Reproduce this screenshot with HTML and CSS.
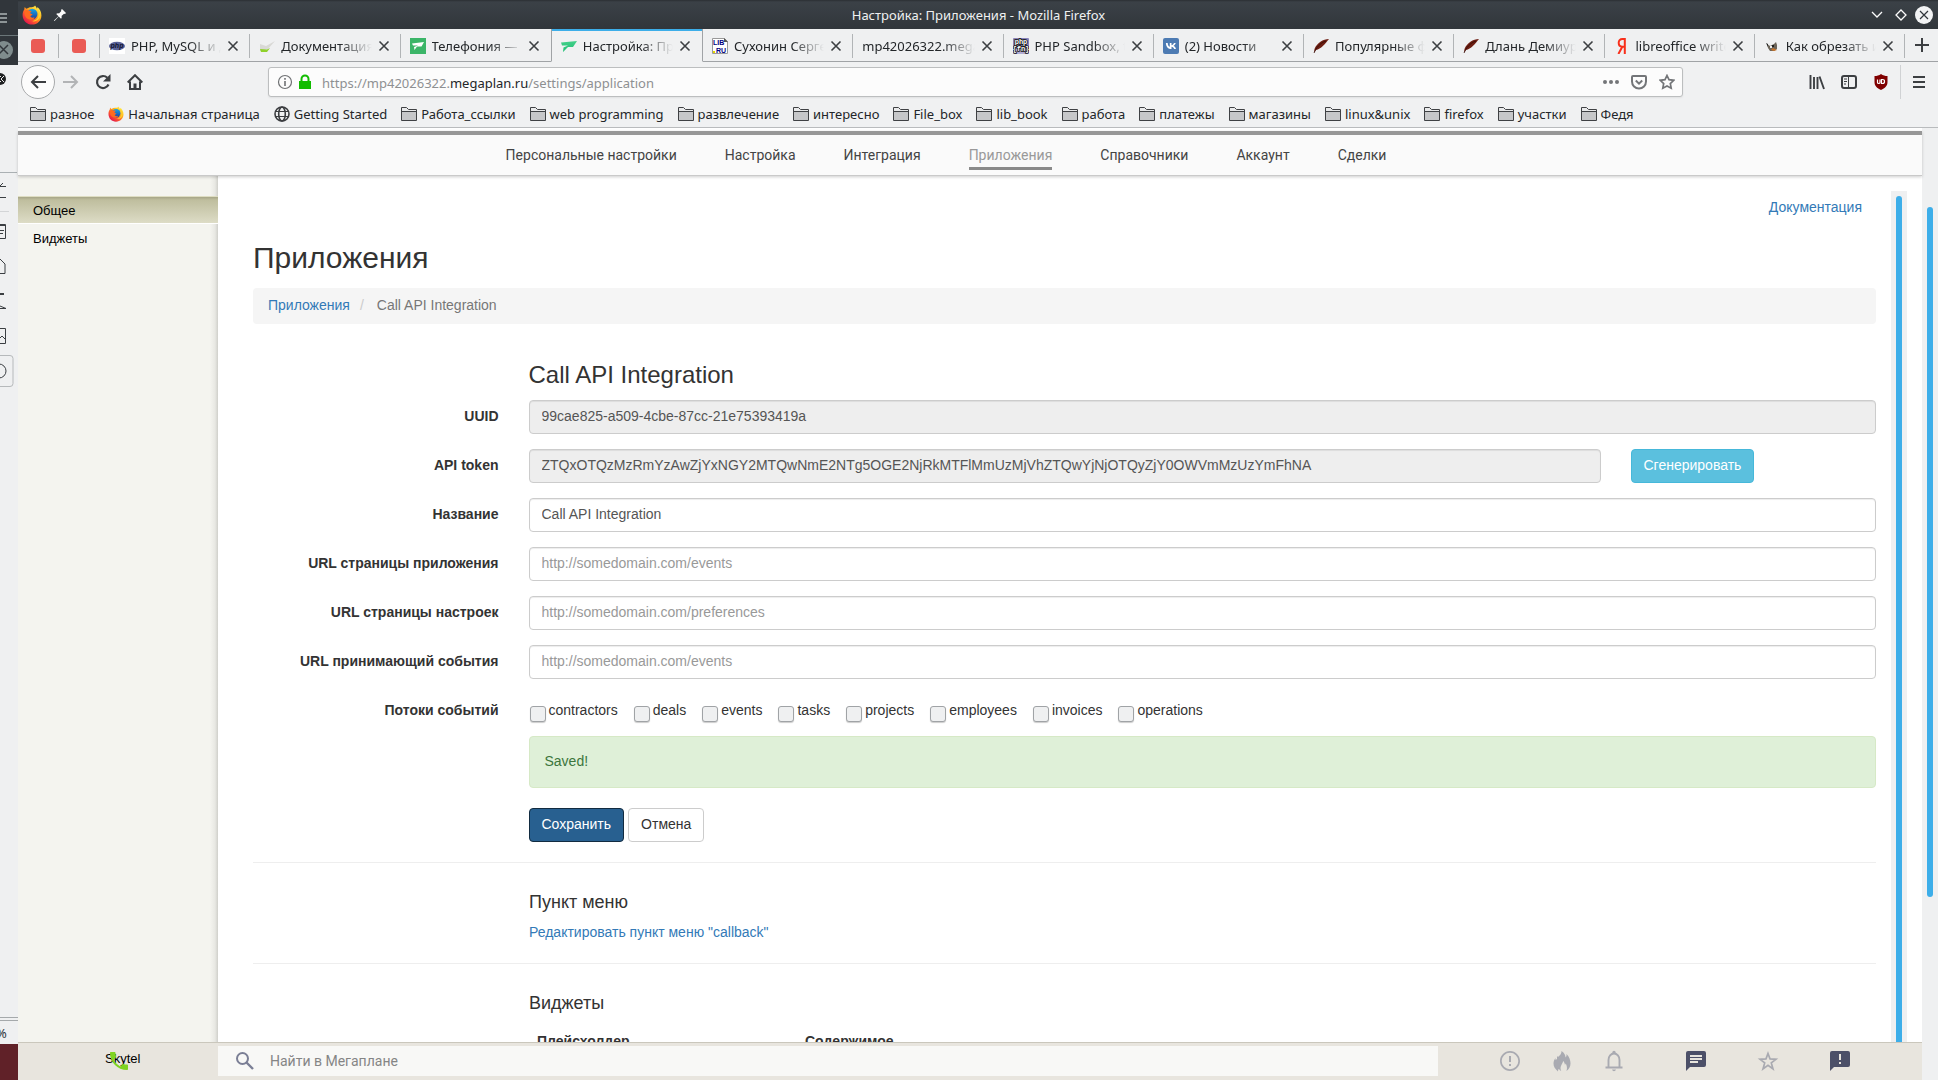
FILE: index.html
```html
<!DOCTYPE html>
<html lang="ru">
<head>
<meta charset="utf-8">
<title>Настройка: Приложения - Mozilla Firefox</title>
<meta name="viewport" content="width=device-width, initial-scale=1">
<link rel="stylesheet" href="styles.css">
</head>
<body>
<svg class="defs" aria-hidden="true">
  <defs>
    <linearGradient id="fx-flame" x1="0.9" y1="0.1" x2="0.2" y2="0.95">
      <stop offset="0" stop-color="#fff44f"/><stop offset="0.35" stop-color="#ffb31a"/><stop offset="0.65" stop-color="#ff5a2c"/><stop offset="1" stop-color="#e0124f"/>
    </linearGradient>
    <linearGradient id="fx-globe" x1="0" y1="0" x2="0" y2="1"><stop offset="0" stop-color="#16a7e8"/><stop offset="1" stop-color="#1f3f9e"/></linearGradient>
    <linearGradient id="mp-green" x1="0" y1="0" x2="0" y2="1"><stop offset="0" stop-color="#45d08a"/><stop offset="1" stop-color="#1fbf74"/></linearGradient>
  </defs>
  <symbol id="firefox" viewBox="0 0 20 20">
    <path fill="url(#fx-flame)" d="M13 0.6c1 1 1.5 2 1.8 3 .6-.3.6-1 .6-1.5 2.600 2 4 5 4 8.300C19.400 15.600 15.200 19.600 10 19.600S.6 15.600.6 10c0-2.500.8-4.400 1.700-5.600 0-.8.100-1.700.5-2.400.4.900 1 1.500 1.600 1.800C6 2.600 8 2 9.500 2.200 11 2 12.500 2 13 .6z"/>
    <circle cx="10.200" cy="9" r="5.300" fill="url(#fx-globe)"/>
    <path fill="#ff6a1f" d="M2.600 5.800c1.500-1 3.600-.9 4.900 0 1.200-.3 1.900 0 2.400.4-1 .4-1.600 1.200-1.600 1.900 0 .8 1.200 1 2.200 1-.2 1.200-1.400 1.500-2.200 2.200.6 1.500 2.500 1.700 4 1 .5.700-1 2.400-3.300 2.400-3.200 0-5.700-2.300-6.400-4.900z"/>
    <path fill="#ffcf2e" d="M15 4.500c2 2 2.500 5.500.8 8.300-1.100 1.900-3.400 3.300-5.700 3.300 3.700 1.200 8-1.500 8.200-6C18.400 7.600 17 5.600 15 4.500z"/>
  </symbol>
  <symbol id="folder" viewBox="0 0 16 16">
    <path d="M.5 1.500h5l2 2h8v11h-15z" fill="#e9eaeb" stroke="#3f4144"/>
    <path d="M1 6h14v8H1z" fill="#c6c7c9"/><path d="M1 5.500h14" stroke="#3f4144"/>
  </symbol>
  <symbol id="globe" viewBox="0 0 16 16">
    <g fill="none" stroke="#3b3d40" stroke-width="1.600"><circle cx="8" cy="8" r="7"/><ellipse cx="8" cy="8" rx="3.300" ry="7"/><path d="M1.500 5.500h13M1.500 10.500h13" stroke-width="1.200"/></g>
  </symbol>
  <symbol id="cross" viewBox="0 0 12 12"><path d="M1.500 1.500l9 9M10.500 1.500l-9 9" stroke="#3c3f42" stroke-width="1.600"/></symbol>
  <symbol id="pinned" viewBox="0 0 16 16"><rect x="1" y="1" width="14" height="14" rx="3" fill="#ea5b55"/></symbol>
  <symbol id="docs" viewBox="0 0 16 16"><path fill="#d9d9d6" d="M1 6l6 2 9-5-7 8-8 2z"/><path fill="#8fd12b" d="M1 11l7 .5 3-1.500-3 4H2z"/></symbol>
  <symbol id="mp-square" viewBox="0 0 16 16"><path fill="#3bb568" d="M0 0h16v16H0z"/><path fill="#fff" d="M2 5.500L14 4l-2.500 4.500H7L4.500 12 4 9l4-1.500H3z"/></symbol>
  <symbol id="mp-plain" viewBox="0 0 16 16"><path fill="url(#mp-green)" d="M0 4.500L16 3l-4 6H7l-5 5 .5-4.500L7 7.500H1z"/></symbol>
  <symbol id="vk" viewBox="0 0 16 16"><rect width="16" height="16" rx="2" fill="#4d7bb3"/><path fill="#fff" d="M8.600 11C5 11 3 8.600 2.900 4.900h1.800c.1 2.600 1.200 3.700 2.100 3.900V4.900h1.700v2.300c1-.1 2.100-1.200 2.500-2.300h1.700c-.3 1.400-1.400 2.400-2.200 2.900.8.400 2 1.300 2.500 3.200h-1.900c-.4-1.200-1.400-2.100-2.600-2.200V11z"/></symbol>
  <symbol id="feather" viewBox="0 0 16 16"><path fill="#6d1d12" d="M16 1C10 1 4 5 1.500 11L1 15l2-3c5-1 9-6 13-11z"/><path stroke="#2b0905" stroke-width=".7" d="M1 15C3 10 7 5 13 3" fill="none"/></symbol>
  <symbol id="yandex" viewBox="0 0 16 16"><path fill="none" stroke="#f8301b" stroke-width="2" d="M10.800 16V1H8.500C5.900 1 4.700 2.700 4.700 4.800 4.700 7.300 6 8.700 8.400 8.700h2.400M8.300 8.700L4.400 16"/></symbol>
  <symbol id="gimp" viewBox="0 0 16 16"><path fill="#6b6459" d="M3 6l3 2 4-2 2-2 1 3v4l-3 2H6L4 10z"/><path fill="#222" d="M2 5l2 1v3zM8 7h2v2H8z"/><path fill="#c7742a" d="M9 10l4 2-3 1-3-1z"/><path fill="#eee" d="M6 8h2v2H6z"/></symbol>
</svg>

<div class="desktop">
  <aside class="behind" aria-hidden="true">
    <svg class="behind-top" width="18" height="400" viewBox="0 0 18 400">
      <path fill="#31363b" d="M0 0h18v65H0z"/><path fill="#6b7679" d="M0 35h18v1H0z"/>
      <path stroke="#8d9496" stroke-width="2" d="M0 14h7M0 18h7M0 22h7"/>
      <circle cx="4" cy="50" r="9" fill="#7f8c8d"/><path d="M-1 45l9 9M8 45l-9 9" stroke="#31363b" stroke-width="1.500"/>
      <circle cx="0" cy="79" r="6" fill="#1f2122"/><path d="M1 76l-3 3 3 3M4 76l-3 3 3 3" stroke="#eee" fill="none"/>
      <path fill="#aab0b3" d="M0 172h17v1H0z"/>
      <g fill="none" stroke="#3b3f43"><path d="M0 186.500h6M0 197.500h6M0 186l3-3M0 224.500h5.500v14H0M0 230.500h4M0 233.500h3M0 259l5 5v9.500H0M0 306l6 2.500H0M0 328.500h5.500v15H0M0 338l2-2 3 3"/><path stroke-width="2" d="M0 225h5M0 294h4"/><circle cx="-1" cy="371" r="7"/></g>
      <path stroke="#d3d5d7" d="M0 211.500h9"/><path stroke="#b6b9bb" fill="none" d="M0 355.500h10q3 0 3 3v25q0 3-3 3H0"/>
    </svg>
    <div class="behind-bottom"><span class="percent">%</span><span class="panel"></span></div>
  </aside>

  <div class="window">
    <header class="titlebar">
      <svg width="20" height="20"><use href="#firefox"/></svg>
      <svg width="12" height="12" viewBox="0 0 12 12"><path fill="#fcfcfc" d="M8 0l4 4-1 1-1-.3L7.500 7c.4 1.200.2 2-.5 2.800L4.700 7.500.8 11.800 0 12l.2-.8L4.500 7.300 2.200 5C3 4.200 4 4 5 4.500L7.300 2 7 1z"/></svg>
      <h1 class="window-title">Настройка: Приложения - Mozilla Firefox</h1>
      <button class="plain" aria-label="Свернуть"><svg width="12" height="12" viewBox="0 0 12 12"><path d="M1 3l5 5 5-5" fill="none" stroke="#fcfcfc" stroke-width="1.300"/></svg></button>
      <button class="plain" aria-label="Развернуть"><svg width="12" height="12" viewBox="0 0 12 12"><path d="M6 1l5 5-5 5-5-5z" fill="none" stroke="#fcfcfc" stroke-width="1.300"/></svg></button>
      <button class="plain close-window" aria-label="Закрыть"><svg width="18" height="18" viewBox="0 0 18 18"><circle cx="9" cy="9" r="9" fill="#f2f3f4"/><path d="M5 5l8 8M13 5l-8 8" stroke="#31363b" stroke-width="1.200"/></svg></button>
    </header>

    <nav class="tabs" aria-label="Вкладки">
      <div class="tab pin"><svg width="16" height="16"><use href="#pinned"/></svg></div>
      <div class="tab pin"><svg width="16" height="16"><use href="#pinned"/></svg></div>
      <div class="tab"><svg width="16" height="16" viewBox="0 0 16 16"><path fill="#fff" d="M0 0h16v16H0z"/><ellipse cx="8" cy="8" rx="8" ry="4.300" fill="#5a6399"/><text x="8" y="10" text-anchor="middle" font-family="Liberation Sans" font-size="7" font-weight="700" font-style="italic" fill="#10132e">php</text></svg><span class="tab-text">PHP, MySQL и другие веб</span><button class="plain" aria-label="Закрыть вкладку"><svg width="12" height="12"><use href="#cross"/></svg></button></div>
      <div class="tab"><svg width="16" height="16"><use href="#docs"/></svg><span class="tab-text">Документация</span><button class="plain" aria-label="Закрыть вкладку"><svg width="12" height="12"><use href="#cross"/></svg></button></div>
      <div class="tab before-active"><svg width="16" height="16"><use href="#mp-square"/></svg><span class="tab-text">Телефония — Мегаплан</span><button class="plain" aria-label="Закрыть вкладку"><svg width="12" height="12"><use href="#cross"/></svg></button></div>
      <div class="tab active"><svg width="16" height="16"><use href="#mp-plain"/></svg><span class="tab-text">Настройка: Приложения</span><button class="plain" aria-label="Закрыть вкладку"><svg width="12" height="12"><use href="#cross"/></svg></button></div>
      <div class="tab"><svg width="16" height="16" viewBox="0 0 16 16"><path fill="#fff" stroke="#999" d="M.5.500h12l3 3v12H.5z"/><path fill="#555" d="M12 0l4 4h-4z"/><text x="1" y="7" font-family="Liberation Sans" font-size="7" font-weight="700" fill="#000080">LIB</text><text x="4" y="15" font-family="Liberation Sans" font-size="7" font-weight="700" fill="#000080">RU</text><path fill="#e7d600" d="M1 13h2v2H1z"/></svg><span class="tab-text">Сухонин Сергей</span><button class="plain" aria-label="Закрыть вкладку"><svg width="12" height="12"><use href="#cross"/></svg></button></div>
      <div class="tab"><span class="tab-text">mp42026322.megaplan.ru</span><button class="plain" aria-label="Закрыть вкладку"><svg width="12" height="12"><use href="#cross"/></svg></button></div>
      <div class="tab"><svg width="16" height="16" viewBox="0 0 16 16"><rect width="16" height="16" rx="1" fill="#8a83b8"/><path fill="#b1acd3" d="M0 11h16v5H0z"/><g font-family="Liberation Mono" font-size="7" font-weight="700" fill="#fff" stroke="#111" stroke-width="1.600" paint-order="stroke" text-anchor="middle"><text x="8" y="6">php</text><text x="8" y="13">{fn}</text></g></svg><span class="tab-text">PHP Sandbox, test</span><button class="plain" aria-label="Закрыть вкладку"><svg width="12" height="12"><use href="#cross"/></svg></button></div>
      <div class="tab"><svg width="16" height="16"><use href="#vk"/></svg><span class="tab-text">(2) Новости</span><button class="plain" aria-label="Закрыть вкладку"><svg width="12" height="12"><use href="#cross"/></svg></button></div>
      <div class="tab"><svg width="16" height="16"><use href="#feather"/></svg><span class="tab-text">Популярные фанфики</span><button class="plain" aria-label="Закрыть вкладку"><svg width="12" height="12"><use href="#cross"/></svg></button></div>
      <div class="tab"><svg width="16" height="16"><use href="#feather"/></svg><span class="tab-text">Длань Демиурга</span><button class="plain" aria-label="Закрыть вкладку"><svg width="12" height="12"><use href="#cross"/></svg></button></div>
      <div class="tab"><svg width="16" height="16"><use href="#yandex"/></svg><span class="tab-text">libreoffice writer</span><button class="plain" aria-label="Закрыть вкладку"><svg width="12" height="12"><use href="#cross"/></svg></button></div>
      <div class="tab"><svg width="16" height="16"><use href="#gimp"/></svg><span class="tab-text">Как обрезать изображение</span><button class="plain" aria-label="Закрыть вкладку"><svg width="12" height="12"><use href="#cross"/></svg></button></div>
      <button class="plain new-tab" aria-label="Новая вкладка"><svg width="14" height="14" viewBox="0 0 14 14"><path d="M7 0v14M0 7h14" stroke="#3c3f42" stroke-width="2"/></svg></button>
    </nav>

    <div class="toolbar">
      <div class="nav-buttons">
        <button class="back" aria-label="Назад"><svg width="16" height="14" viewBox="0 0 16 14"><path d="M16 7H2M8 1L2 7l6 6" fill="none" stroke="#3c3f42" stroke-width="2"/></svg></button>
        <button class="plain" aria-label="Вперёд"><svg width="16" height="14" viewBox="0 0 16 14"><path d="M0 7h14M8 1l6 6-6 6" fill="none" stroke="#b2b4b6" stroke-width="2"/></svg></button>
        <button class="plain" aria-label="Обновить"><svg width="16" height="16" viewBox="0 0 16 16"><path d="M13.500 10.500A6 6 0 1 1 12.300 3.800" fill="none" stroke="#3c3f42" stroke-width="2.200"/><path d="M15.500 0v7.500H8z" fill="#3c3f42"/></svg></button>
        <button class="plain" aria-label="Домой"><svg width="16" height="16" viewBox="0 0 16 16"><path d="M.7 8.500L8 1.200l7.300 7.300M3 7.500V15h10V7.500" fill="none" stroke="#3c3f42" stroke-width="2"/><path d="M6.500 9.500h3V15h-3z" fill="#3c3f42"/></svg></button>
      </div>
      <div class="urlbar">
        <svg width="16" height="16" viewBox="0 0 16 16"><circle cx="8" cy="8" r="6.500" fill="none" stroke="#6f7173" stroke-width="1.200"/><path d="M7.200 7h1.600v5H7.200zM7.200 4h1.600v1.700H7.200z" fill="#6f7173"/></svg>
        <svg width="16" height="16" viewBox="0 0 16 16"><path d="M2 7h12v8H2z" fill="#12bc00"/><path d="M4.500 8V5a3.500 3.500 0 0 1 7 0v3" fill="none" stroke="#12bc00" stroke-width="2"/></svg>
        <div class="url" role="textbox" aria-label="Адрес" contenteditable="true" spellcheck="false">https://mp42026322.<b>megaplan.ru</b>/settings/application</div>
        <button class="plain" aria-label="Действия"><svg width="16" height="16" viewBox="0 0 16 16"><g fill="#737578"><circle cx="2" cy="8" r="2"/><circle cx="8" cy="8" r="2"/><circle cx="14" cy="8" r="2"/></g></svg></button>
        <button class="plain" aria-label="Pocket"><svg width="16" height="16" viewBox="0 0 16 16"><path d="M2 2h12q1 0 1 1v4.500a7 7 0 0 1-14 0V3q0-1 1-1z" fill="none" stroke="#737578" stroke-width="2"/><path d="M4.800 6.500L8 9.600l3.200-3.100" fill="none" stroke="#737578" stroke-width="2"/></svg></button>
        <button class="plain" aria-label="В закладки"><svg width="16" height="16" viewBox="0 0 16 16"><path d="M8 1.500l2 4.200 4.800.6-3.500 3.200.9 4.700L8 12l-4.200 2.200.9-4.700L1.200 6.300 6 5.700z" fill="none" stroke="#737578" stroke-width="1.700"/></svg></button>
      </div>
      <div class="tools">
        <button class="plain" aria-label="Библиотека"><svg width="16" height="16" viewBox="0 0 16 16"><path d="M1.500 1v14M5 3v12M8.500 3v12M10.500 2.500L15 15" stroke="#3c3f42" stroke-width="1.900"/></svg></button>
        <button class="plain" aria-label="Боковая панель"><svg width="16" height="16" viewBox="0 0 16 16"><rect x="1" y="2" width="14" height="12" rx="2" fill="none" stroke="#3c3f42" stroke-width="2"/><path d="M7.500 2v12" stroke="#3c3f42"/><path d="M3 5h3M3 7.500h3M3 10h2" stroke="#3c3f42"/></svg></button>
        <button class="plain" aria-label="uBlock Origin"><svg width="16" height="16" viewBox="0 0 16 16"><path d="M8 0c2 1.500 4 2 6.500 2v6c0 4-2.500 6-6.500 8-4-2-6.500-4-6.500-8V2C4 2 6 1.500 8 0z" fill="#800000"/><path d="M4.500 5.500v3q0 1 1.200 1t1.300-1v-3M8.500 9.500h1q2 0 2-2t-2-2h-1z" fill="none" stroke="#fff" stroke-width="1.200"/></svg></button>
        <button class="plain menu" aria-label="Меню"><svg width="12" height="16" viewBox="0 0 12 16"><path d="M0 3h12M0 8h12M0 13h12" stroke="#3c3f42" stroke-width="2"/></svg></button>
      </div>
    </div>

    <nav class="bookmarks" aria-label="Закладки">
      <a href="#"><svg width="16" height="16"><use href="#folder"/></svg>разное</a>
      <a href="#"><svg width="16" height="16"><use href="#firefox"/></svg>Начальная страница</a>
      <a href="#"><svg width="16" height="16"><use href="#globe"/></svg>Getting Started</a>
      <a href="#"><svg width="16" height="16"><use href="#folder"/></svg>Работа_ссылки</a>
      <a href="#"><svg width="16" height="16"><use href="#folder"/></svg>web programming</a>
      <a href="#"><svg width="16" height="16"><use href="#folder"/></svg>развлечение</a>
      <a href="#"><svg width="16" height="16"><use href="#folder"/></svg>интересно</a>
      <a href="#"><svg width="16" height="16"><use href="#folder"/></svg>File_box</a>
      <a href="#"><svg width="16" height="16"><use href="#folder"/></svg>lib_book</a>
      <a href="#"><svg width="16" height="16"><use href="#folder"/></svg>работа</a>
      <a href="#"><svg width="16" height="16"><use href="#folder"/></svg>платежы</a>
      <a href="#"><svg width="16" height="16"><use href="#folder"/></svg>магазины</a>
      <a href="#"><svg width="16" height="16"><use href="#folder"/></svg>linux&amp;unix</a>
      <a href="#"><svg width="16" height="16"><use href="#folder"/></svg>firefox</a>
      <a href="#"><svg width="16" height="16"><use href="#folder"/></svg>участки</a>
      <a href="#"><svg width="16" height="16"><use href="#folder"/></svg>Федя</a>
    </nav>

    <div class="viewport">
      <div class="page">
        <nav class="site-nav" aria-label="Разделы">
          <a href="#">Персональные настройки</a><a href="#">Настройка</a><a href="#">Интеграция</a><a href="#" class="current">Приложения</a><a href="#">Справочники</a><a href="#">Аккаунт</a><a href="#">Сделки</a>
        </nav>
        <div class="site-body">
          <nav class="sidebar" aria-label="Меню">
            <a href="#" class="current">Общее</a>
            <a href="#">Виджеты</a>
          </nav>
          <main class="content">
            <div class="docs-link"><a href="#">Документация</a></div>
            <h2 class="page-title">Приложения</h2>
            <ol class="breadcrumb"><li><a href="#">Приложения</a></li><li>Call API Integration</li></ol>
            <form class="form">
              <h3 class="form-title">Call API Integration</h3>
              <label class="label" for="uuid">UUID</label>
              <input class="control" id="uuid" value="99cae825-a509-4cbe-87cc-21e75393419a" readonly>
              <label class="label" for="token">API token</label>
              <div class="token-row">
                <input class="control" id="token" value="ZTQxOTQzMzRmYzAwZjYxNGY2MTQwNmE2NTg5OGE2NjRkMTFlMmUzMjVhZTQwYjNjOTQyZjY0OWVmMzUzYmFhNA" readonly>
                <div><button type="button" class="btn info">Сгенерировать</button></div>
              </div>
              <label class="label" for="name">Название</label>
              <input class="control" id="name" value="Call API Integration">
              <label class="label" for="app-url">URL страницы приложения</label>
              <input class="control" id="app-url" placeholder="http://somedomain.com/events">
              <label class="label" for="pref-url">URL страницы настроек</label>
              <input class="control" id="pref-url" placeholder="http://somedomain.com/preferences">
              <label class="label" for="event-url">URL принимающий события</label>
              <input class="control" id="event-url" placeholder="http://somedomain.com/events">
              <span class="label" id="streams">Потоки событий</span>
              <div class="checks" role="group" aria-labelledby="streams">
                <label><input type="checkbox">contractors</label>
                <label><input type="checkbox">deals</label>
                <label><input type="checkbox">events</label>
                <label><input type="checkbox">tasks</label>
                <label><input type="checkbox">projects</label>
                <label><input type="checkbox">employees</label>
                <label><input type="checkbox">invoices</label>
                <label><input type="checkbox">operations</label>
              </div>
              <div class="alert" role="status">Saved!</div>
              <div class="actions"><button type="button" class="btn primary">Сохранить</button><button type="button" class="btn default">Отмена</button></div>
            </form>
            <section class="section">
              <h4>Пункт меню</h4>
              <a href="#">Редактировать пункт меню "callback"</a>
            </section>
            <section class="section">
              <h4>Виджеты</h4>
              <table class="widgets"><thead><tr><th>Плейсхолдер</th><th>Содержимое</th></tr></thead></table>
            </section>
          </main>
          <div class="scroll inner"><span></span></div>
        </div>
        <footer class="dock">
          <a class="skytel" href="#">Skytel<svg width="24" height="24" viewBox="0 0 24 24"><path d="M6.620 10.790c1.440 2.830 3.760 5.140 6.590 6.590l2.200-2.200c.27-.27.670-.36 1.020-.24 1.120.37 2.330.57 3.570.57.550 0 1 .45 1 1V20c0 .55-.45 1-1 1-9.390 0-17-7.610-17-17 0-.55.450-1 1-1h3.500c.55 0 1 .45 1 1 0 1.250.200 2.450.570 3.570.110.350.030.740-.250 1.020z" fill="#7ed321"/></svg></a>
          <div class="search">
            <svg width="18" height="18" viewBox="0 0 18 18"><circle cx="6.500" cy="6.500" r="5.500" fill="none" stroke="#7b7f95" stroke-width="2"/><path d="M10.500 10.500l6.500 6.500" stroke="#7b7f95" stroke-width="2.400"/></svg>
            <input type="search" aria-label="Поиск" placeholder="Найти в Мегаплане">
          </div>
          <div class="dock-icons">
            <button class="plain" aria-label="Важное"><svg width="24" height="24" viewBox="0 0 24 24"><path fill="#a9aab1" d="M11 15h2v2h-2zm0-8h2v6h-2zm1-5C6.500 2 2 6.500 2 12s4.500 10 10 10 10-4.500 10-10S17.500 2 12 2zm0 18.300a8.300 8.300 0 1 1 0-16.600 8.300 8.300 0 0 1 0 16.600z"/></svg></button>
            <button class="plain" aria-label="Горящее"><svg width="24" height="24" viewBox="0 0 24 24"><path fill="#a9aab1" d="M11.500 2c3 2 4 4.500 4 6.500l1-1.500V5c3 3 4 6.500 4 9.500 0 3-1.500 5.500-4 7.500 1-3 .3-5.500-.8-7.500l-.7 1.500c-.3-2-.8-3-1.800-4-.2 2-2.700 4.500-2.700 7 0 1 .3 2 .7 3-.9-.3-1.700-1-2.200-2l-.8.500-.2 2C5 20 3.500 17.500 3.500 14.500c0-2 .8-4 2-5.500v2l1.500-1V7l1 1c2.500-2 3.500-3.500 3.500-6z"/></svg></button>
            <button class="plain" aria-label="Уведомления"><svg width="24" height="24" viewBox="0 0 24 24"><path fill="none" stroke="#a9aab1" stroke-width="1.900" d="M3.500 18.500h17M6.500 18v-7a5.500 6.500 0 0 1 11 0v7"/><path fill="#a9aab1" d="M10.300 5V3.500a1.700 1.700 0 0 1 3.400 0V5zM10 20.500h4q-.5 1.800-2 1.800t-2-1.800z"/></svg></button>
            <button class="plain" aria-label="Сообщения"><svg width="24" height="24" viewBox="0 0 24 24"><path fill="#4c5068" d="M20 2H4a2 2 0 0 0-2 2v18l4-4h14a2 2 0 0 0 2-2V4a2 2 0 0 0-2-2z"/><path stroke="#e8e5de" stroke-width="2" d="M6 7h12M6 10h12M6 13h8"/></svg></button>
            <button class="plain" aria-label="Избранное"><svg width="24" height="24" viewBox="0 0 24 24"><path fill="none" stroke="#a9aab1" stroke-width="1.700" stroke-linejoin="miter" d="M12 4.500l2 5.400 6 .4-4.700 3.600 1.700 6-5-3.500-5 3.500 1.700-6L4 10.300l6-.4z"/></svg></button>
            <button class="plain" aria-label="Отзыв"><svg width="24" height="24" viewBox="0 0 24 24"><path fill="#4c5068" d="M20 2H4a2 2 0 0 0-2 2v18l4-4h14a2 2 0 0 0 2-2V4a2 2 0 0 0-2-2z"/><path stroke="#e8e5de" stroke-width="2" d="M12 5v6M12 13v2"/></svg></button>
          </div>
        </footer>
      </div>
      <div class="scroll outer"><span></span></div>
    </div>
  </div>
</div>
</body>
</html>
```
FILE: styles.css
```css
* { box-sizing: border-box; }
html, body { height: 100%; }
body { margin: 0; font: 13px/18px "Noto Sans", sans-serif; color: #31363b; background: #eff0f1; overflow: hidden; }
a { color: #337ab7; text-decoration: none; }
svg { display: block; flex: none; }
h1, h2, h3, h4, ol { margin: 0; padding: 0; font-weight: 400; }
.defs { position: absolute; width: 0; height: 0; }
.plain { border: 0; padding: 0; background: none; flex: none; }

.desktop { display: grid; grid-template-columns: 18px minmax(0, 1fr); height: 100vh; }
.behind { display: flex; flex-direction: column; justify-content: space-between; overflow: hidden; background: #eff0f1; }
.behind-bottom { display: flex; flex-direction: column; border-top: 1px solid #a5a9ab; }
.percent { margin-top: 2px; border-top: 1px solid #a5a9ab; height: 24px; line-height: 24px; margin-left: -4px; }
.panel { height: 36px; background: #602128; }

.window { display: flex; flex-direction: column; min-width: 0; min-height: 0; }
.titlebar { display: flex; align-items: center; gap: 12px; height: 29px; flex: none; padding: 0 5px 0 4px; background: linear-gradient(#2b2f33 0, #3b4147 2px, #31363b); }
.window-title { flex: 1; padding-left: 20px; text-align: center; font-size: 13px; color: #eff0f1; }
.close-window { margin-left: -4px; }

.tabs { display: flex; height: 33px; flex: none; background: #eff0f1; }
.tab { flex: 1 1 0; min-width: 0; display: flex; align-items: center; gap: 6px; padding: 2px 11px 0 9px; border-bottom: 1px solid #a0a3a6; position: relative; color: #232629; }
.tab::after { content: ""; position: absolute; right: 0; top: 5px; height: 24px; border-right: 1px solid #b1b4b6; }
.tab.pin { flex: 0 0 41px; padding: 2px 2px 0 0; justify-content: center; }
.tab-text { flex: 1; overflow: hidden; white-space: nowrap; mask-image: linear-gradient(to left, transparent, #000 32px); }
.tab.active { background: #f0f1f2; border: 1px solid #a0a3a6; border-bottom-color: #f0f1f2; border-top: 0; box-shadow: inset 0 2px #3daee9; }
.tab.active::after, .tab.before-active::after { display: none; }
.new-tab { width: 33px; border-bottom: 1px solid #a0a3a6; display: flex; align-items: center; justify-content: center; }

.toolbar { display: flex; align-items: center; height: 40px; flex: none; background: #f0f1f2; }
.nav-buttons { display: flex; align-items: center; gap: 16px; width: 250px; padding-left: 3px; }
.back { width: 34px; height: 34px; margin-right: -8px; padding: 0; border: 1px solid #a8aaac; border-radius: 50%; background: #fcfcfc; display: flex; align-items: center; justify-content: center; }
.urlbar { flex: 1; min-width: 0; display: flex; align-items: center; gap: 12px; height: 30px; padding: 0 7px 0 8px; background: #fcfcfc; border: 1px solid #bcbebf; border-radius: 3px; box-shadow: 0 1px 2px #0001; }
.urlbar > svg + svg { margin-left: -8px; }
.url { flex: 1; margin-left: -3px; padding-top: 2px; overflow: hidden; white-space: nowrap; color: #8e9092; outline: 0; }
.url b { font-weight: 400; color: #232629; }
.tools { display: flex; align-items: center; gap: 16px; width: 255px; padding-right: 13px; justify-content: flex-end; }
.menu { border-left: 1px solid #d0d2d4; height: 34px; padding-left: 12px; margin-left: -5px; }

.bookmarks { display: flex; align-items: center; gap: 14px; height: 26px; flex: none; padding: 0 12px 2px; background: #f0f1f2; border-bottom: 1px solid #b9bbbd; white-space: nowrap; overflow: hidden; }
.bookmarks a { display: flex; align-items: center; gap: 4px; color: #232629; }

.viewport { flex: 1; min-height: 0; display: grid; grid-template-columns: minmax(0, 1fr) 16px; }
.page { display: flex; flex-direction: column; min-height: 0; background: #fff; padding-top: 3px; }
.site-nav { display: flex; justify-content: center; flex: none; height: 45px; border-top: 4px solid #979797; border-bottom: 1px solid #c9c9c9; background: #fafafa; box-shadow: 0 1px 3px #0003; z-index: 1; font: 14px/22px Roboto, sans-serif; }
.site-nav a { color: #444; margin: 9px 48px 0 0; height: 26px; white-space: nowrap; }
.site-nav .current { color: #999; border-bottom: 3px solid #8a8a8a; }
.site-body { flex: 1; min-height: 0; display: flex; overflow: hidden; font: 14px/20px "Liberation Sans", Arial, sans-serif; color: #333; }
.sidebar { width: 200px; flex: none; padding-top: 20px; background: linear-gradient(to left, #cfcfca, #e8e8e3 3px, #f4f4ef 8px); font-size: 13px; }
.sidebar a { display: block; height: 28px; padding: 5px 15px; color: #000; }
.sidebar .current { padding-top: 4px; border-top: 1px solid #deddc2; border-bottom: 1px solid #fff; background: linear-gradient(#a6a586, #bfbe9e 3px, #dddcc6); }
.content { flex: 1; min-width: 0; padding: 21px 15px 0 35px; }
.docs-link { text-align: right; padding-right: 14px; }
.page-title { margin-top: 24px; font-size: 30px; line-height: 33px; }
.breadcrumb { display: flex; list-style: none; margin-top: 14px; padding: 7px 15px 9px; background: #f5f5f5; border-radius: 4px; color: #777; }
.breadcrumb li + li::before { content: "/"; padding: 0 13px 0 10px; color: #ccc; }
.form { display: grid; grid-template-columns: 2fr 10fr; margin: 36px -15px 0; row-gap: 15px; }
.form > * { margin: 0 15px; min-width: 0; }
.form-title { grid-column: 2; font-size: 24px; line-height: 30px; margin-bottom: -5px; }
.label { font-weight: 700; text-align: right; padding-top: 6px; }
.control { width: auto; height: 34px; padding: 5px 12px 7px; border: 1px solid #ccc; border-radius: 4px; background: #fff; color: #555; font: inherit; box-shadow: inset 0 1px 1px #00000013; }
.control[readonly] { background: #eee; }
.control::placeholder { color: #999; opacity: 1; }
.token-row { display: grid; grid-template-columns: 8fr 2fr; margin: 0; }
.token-row > * { margin: 0 15px; }
.btn { height: 34px; padding: 5px 12px 7px; border: 1px solid; border-radius: 4px; font: inherit; }
.info { background: #5bc0de; border-color: #46b8da; color: #fff; }
.primary { background: #286090; border-color: #122b40; color: #fff; }
.default { background: #fff; border-color: #ccc; color: #333; }
.checks { display: flex; gap: 16px; padding: 6px 0 3px 1px; }
.checks label { display: flex; gap: 3px; }
.checks input { appearance: none; width: 16px; height: 16px; margin: 6px 0 0; border: 1px solid #a0a3a6; border-radius: 3px; background: #eff0f1; box-shadow: 0 1px 1px #0003; }
.alert { grid-column: 2; height: 52px; padding: 14px 15px; margin-top: -4px; border: 1px solid #d6e9c6; border-radius: 4px; background: #dff0d8; color: #3c763d; }
.actions { grid-column: 2; display: flex; gap: 4px; margin-top: 5px; }
.section { margin-top: 20px; border-top: 1px solid #eee; padding: 29px 0 0 276px; min-height: 81px; }
.section h4 { font-size: 18px; line-height: 20px; margin-bottom: 10px; }
.widgets { width: 100%; border-collapse: collapse; margin-top: 18px; table-layout: fixed; }
.widgets th { text-align: left; padding: 0 8px; }
.widgets th:first-child { width: 268px; }
.scroll { background: #eff0f1; padding: 5px; }
.scroll span { display: block; width: 6px; background: #3daee9; border-radius: 3px; }
.inner { flex: none; width: 16px; margin: 15px 15px 0 0; padding-bottom: 0; }
.inner span { height: 100%; border-radius: 3px 3px 0 0; }
.outer { padding-top: 79px; padding-bottom: 0; }
.outer span { height: 79%; }

.dock { flex: none; display: flex; align-items: center; height: 38px; padding-bottom: 1px; background: #e8e5de; border-top: 1px solid #cac7bc; }
.skytel { width: 200px; position: relative; padding: 0 0 4px 87px; color: #000; font: 13px/16px "Liberation Sans", sans-serif; }
.skytel svg { position: absolute; left: 89px; top: -2px; }
.search { flex: 1; display: flex; align-items: center; gap: 16px; height: 30px; padding: 0 18px; background: #f8f8f6; }
.search input { flex: 1; border: 0; padding: 0; background: none; outline: 0; font: 14px/20px Roboto, sans-serif; }
.search input::placeholder { color: #858585; opacity: 1; }
.dock-icons { width: 484px; display: flex; align-items: center; padding-left: 60px; gap: 28px; }
.dock-icons button:nth-child(n+4) { margin-left: 30px; }
.dock-icons button:nth-child(n+5) { margin-left: 20px; }
```
